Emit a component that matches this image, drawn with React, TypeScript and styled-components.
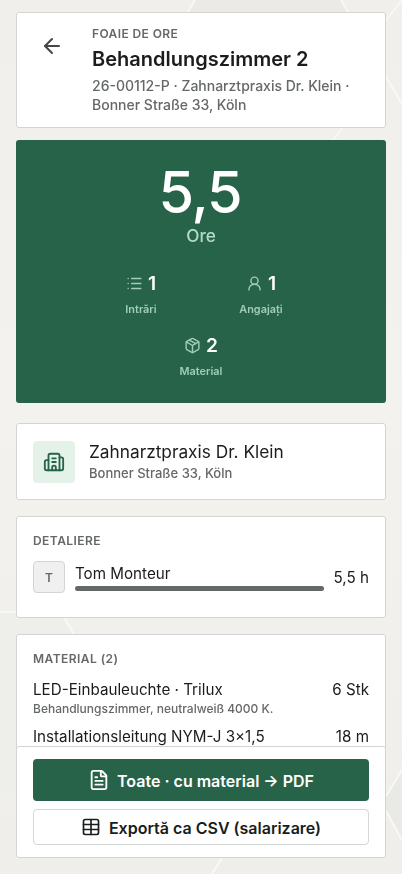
import React from "react";
import styled, { createGlobalStyle } from "styled-components";
import { ArrowLeft, Building2, FileText, List, Package, Table, UserRound } from "lucide-react";

const GlobalStyle = createGlobalStyle`
  * { box-sizing: border-box; }
  html, body { margin: 0; height: 100%; overflow: hidden; }
  html { background: #f2f1ed; }
  body { font-family: Inter, "Noto Sans", sans-serif; color: #1a1d1c; font-weight: 500; }
  button { font-family: inherit; cursor: pointer; }
  h1, h2, p { margin: 0; }
`;

const Backdrop = styled.svg`
  position: fixed;
  inset: 0;
  width: 100%;
  height: 100%;
  z-index: -1;
`;

const Page = styled.main`
  height: 100vh;
  overflow: hidden;
  padding: 12px 16px 0;
`;

const Card = styled.section`
  background: #fff;
  border: 1px solid #d3d5d3;
  border-radius: 3px;
`;

const Header = styled(Card)`
  display: flex;
  height: 116px;
  padding: 12px 15px 10px;
  margin-bottom: 12px;
`;

const BackButton = styled.button`
  display: grid;
  place-items: center;
  width: 40px;
  height: 42px;
  padding: 0;
  margin-right: 20px;
  border: 0;
  background: none;
  color: #444746;
`;

const HeaderText = styled.div`
  flex: 1;
  min-width: 0;
`;

const Eyebrow = styled.p`
  font-size: 12px;
  line-height: 18px;
  font-weight: 600;
  letter-spacing: 0.4px;
  color: #646866;
`;

const Title = styled.h1`
  margin: 3px 0 4px;
  font-size: 20px;
  line-height: 26px;
  font-weight: 600;
  letter-spacing: 0;
`;

const Subtitle = styled.p`
  font-size: 14px;
  line-height: 19px;
  color: #646866;
`;

const Hero = styled.section`
  display: flex;
  flex-direction: column;
  align-items: center;
  height: 263px;
  padding-top: 20px;
  margin-bottom: 20px;
  border-radius: 3px;
  background: #276348;
  color: #fff;
`;

const HeroNumber = styled.div`
  font-size: 57.6px;
  line-height: 64px;
  font-weight: 500;
  letter-spacing: -1.15px;
  margin-right: 2px;
`;

const HeroUnit = styled.div`
  font-size: 17.2px;
  line-height: 24px;
  color: #b5dac8;
`;

const Stats = styled.div`
  display: flex;
  flex-wrap: wrap;
  justify-content: center;
  width: 240px;
  margin-top: 23px;
  row-gap: 17px;
`;

const StatBox = styled.div`
  display: flex;
  flex-direction: column;
  align-items: center;
  width: 120px;
  height: 45px;
`;

const StatValue = styled.div`
  display: flex;
  align-items: center;
  gap: 5px;
  height: 26px;
  font-size: 19.2px;
  font-weight: 600;
  svg { color: #9fcdb7; }
`;

const StatLabel = styled.div`
  margin-top: 6px;
  font-size: 10.9px;
  line-height: 16px;
  font-weight: 600;
  color: #9fcdb7;
`;

const Client = styled(Card)`
  display: flex;
  align-items: center;
  gap: 14px;
  height: 77px;
  padding: 0 16px;
  margin-bottom: 16px;
`;

const ClientIcon = styled.div`
  display: grid;
  place-items: center;
  width: 42px;
  height: 42px;
  border-radius: 4px;
  background: #e4f2ea;
  color: #276348;
`;

const ClientName = styled.div`
  font-size: 17.28px;
  line-height: 24px;
  font-weight: 400;
`;

const ClientAddress = styled.div`
  font-size: 13px;
  line-height: 19px;
  color: #646866;
`;

const Section = styled(Card)<{ $height: number }>`
  height: ${(p) => p.$height}px;
  padding: 15px 16px;
  margin-bottom: 16px;
`;

const SectionTitle = styled.h2`
  font-size: 12px;
  line-height: 18px;
  font-weight: 600;
  letter-spacing: 0.45px;
  color: #646866;
`;

const Worker = styled.div`
  display: flex;
  align-items: center;
  gap: 10px;
  margin-top: 11px;
`;

const Avatar = styled.div`
  display: grid;
  place-items: center;
  width: 32px;
  height: 32px;
  border: 1px solid #d3d5d3;
  border-radius: 4px;
  background: #f0f0f0;
  font-size: 12px;
  font-weight: 600;
  color: #646866;
`;

const WorkerMain = styled.div`
  flex: 1;
  font-size: 15.2px;
  line-height: 20px;
  font-weight: 400;
`;

const Bar = styled.div`
  height: 5px;
  margin-top: 2px;
  border-radius: 3px;
  background: #646866;
`;

const Amount = styled.div`
  margin-top: 1px;
  font-size: 15.2px;
  line-height: 20px;
  font-weight: 400;
  white-space: nowrap;
`;

const MaterialItem = styled.div`
  display: flex;
  justify-content: space-between;
  margin-top: 12px;
  font-size: 15.2px;
  line-height: 20px;
  font-weight: 400;
`;

const Note = styled.div`
  margin: 1px 0 -2px;
  font-size: 12px;
  line-height: 16px;
  color: #646866;
`;

const Actions = styled.footer`
  position: fixed;
  left: 16px;
  right: 16px;
  bottom: 16px;
  display: flex;
  flex-direction: column;
  gap: 8px;
  height: 112px;
  padding: 12px 16px;
  border: 1px solid #d3d5d3;
  border-radius: 3px;
  background: #fff;
`;

const ActionButton = styled.button<{ $primary?: boolean }>`
  display: flex;
  align-items: center;
  justify-content: center;
  gap: ${(p) => (p.$primary ? 7 : 8)}px;
  height: ${(p) => (p.$primary ? 42 : 36)}px;
  flex-shrink: 0;
  padding: ${(p) => (p.$primary ? "2px 0 0" : "1px 0 0")};
  border: ${(p) => (p.$primary ? "0" : "1px solid #d3d7d5")};
  border-radius: 4px;
  background: ${(p) => (p.$primary ? "#276348" : "#fff")};
  color: ${(p) => (p.$primary ? "#fff" : "#1a1d1c")};
  font-size: 16px;
  font-weight: 600;
  white-space: nowrap;
  svg { margin-top: -2px; }
`;

const stats = [
  { icon: List, value: 1, label: "Intrări" },
  { icon: UserRound, value: 1, label: "Angajați" },
  { icon: Package, value: 2, label: "Material" },
];

const materials = [
  { name: "LED-Einbauleuchte · Trilux", amount: "6 Stk", note: "Behandlungszimmer, neutralweiß 4000 K." },
  { name: "Installationsleitung NYM-J 3×1,5", amount: "18 m" },
];

export default function App() {
  return (
    <>
      <GlobalStyle />
      <Backdrop viewBox="0 0 402 874" preserveAspectRatio="none" aria-hidden="true">
        <defs>
          <linearGradient id="stone" x1="0" y1="0" x2="0" y2="1">
            <stop offset="0" stopColor="#f0efeb" />
            <stop offset=".45" stopColor="#f3f2ee" />
            <stop offset="1" stopColor="#efeeea" />
          </linearGradient>
        </defs>
        <rect width="402" height="874" fill="url(#stone)" />
        <path d="M195 0H342L349 14H188Z" fill="#ebeae6" />
        <path d="M0 613H62L78 640V793H0Z" fill="#eeeeea" />
        <path d="M386 793L402 770V842L386 812Z" fill="#e9eae6" />
        <g fill="none" stroke="#f9f8f5" strokeWidth="2">
          <path d="M341 0L402 104M402 0L384 23M344 126L329 145M195 0L188 12" />
          <path d="M0 612H16M61 612L84 652M402 770L386 796M386 811L402 840M222 858L212 874" />
        </g>
      </Backdrop>
      <Page>
        <Header>
          <BackButton aria-label="Înapoi"><ArrowLeft size={24} strokeWidth={2} /></BackButton>
          <HeaderText>
            <Eyebrow>FOAIE DE ORE</Eyebrow>
            <Title>Behandlungszimmer 2</Title>
            <Subtitle>26-00112-P · Zahnarztpraxis Dr. Klein · Bonner Straße 33, Köln</Subtitle>
          </HeaderText>
        </Header>
        <Hero>
          <HeroNumber>5,5</HeroNumber>
          <HeroUnit>Ore</HeroUnit>
          <Stats>
            {stats.map(({ icon: Icon, value, label }) => (
              <StatBox key={label}>
                <StatValue><Icon size={17} strokeWidth={2} />{value}</StatValue>
                <StatLabel>{label}</StatLabel>
              </StatBox>
            ))}
          </Stats>
        </Hero>
        <Client>
          <ClientIcon><Building2 size={22} strokeWidth={2} /></ClientIcon>
          <div>
            <ClientName>Zahnarztpraxis Dr. Klein</ClientName>
            <ClientAddress>Bonner Straße 33, Köln</ClientAddress>
          </div>
        </Client>
        <Section $height={102}>
          <SectionTitle>DETALIERE</SectionTitle>
          <Worker>
            <Avatar>T</Avatar>
            <WorkerMain>Tom Monteur<Bar /></WorkerMain>
            <Amount>5,5 h</Amount>
          </Worker>
        </Section>
        <Section $height={160}>
          <SectionTitle>MATERIAL (2)</SectionTitle>
          {materials.map((m) => (
            <React.Fragment key={m.name}>
              <MaterialItem><span>{m.name}</span><span>{m.amount}</span></MaterialItem>
              {m.note && <Note>{m.note}</Note>}
            </React.Fragment>
          ))}
        </Section>
      </Page>
      <Actions>
        <ActionButton $primary><FileText size={22} />Toate · cu material → PDF</ActionButton>
        <ActionButton><Table size={20} />Exportă ca CSV (salarizare)</ActionButton>
      </Actions>
    </>
  );
}
